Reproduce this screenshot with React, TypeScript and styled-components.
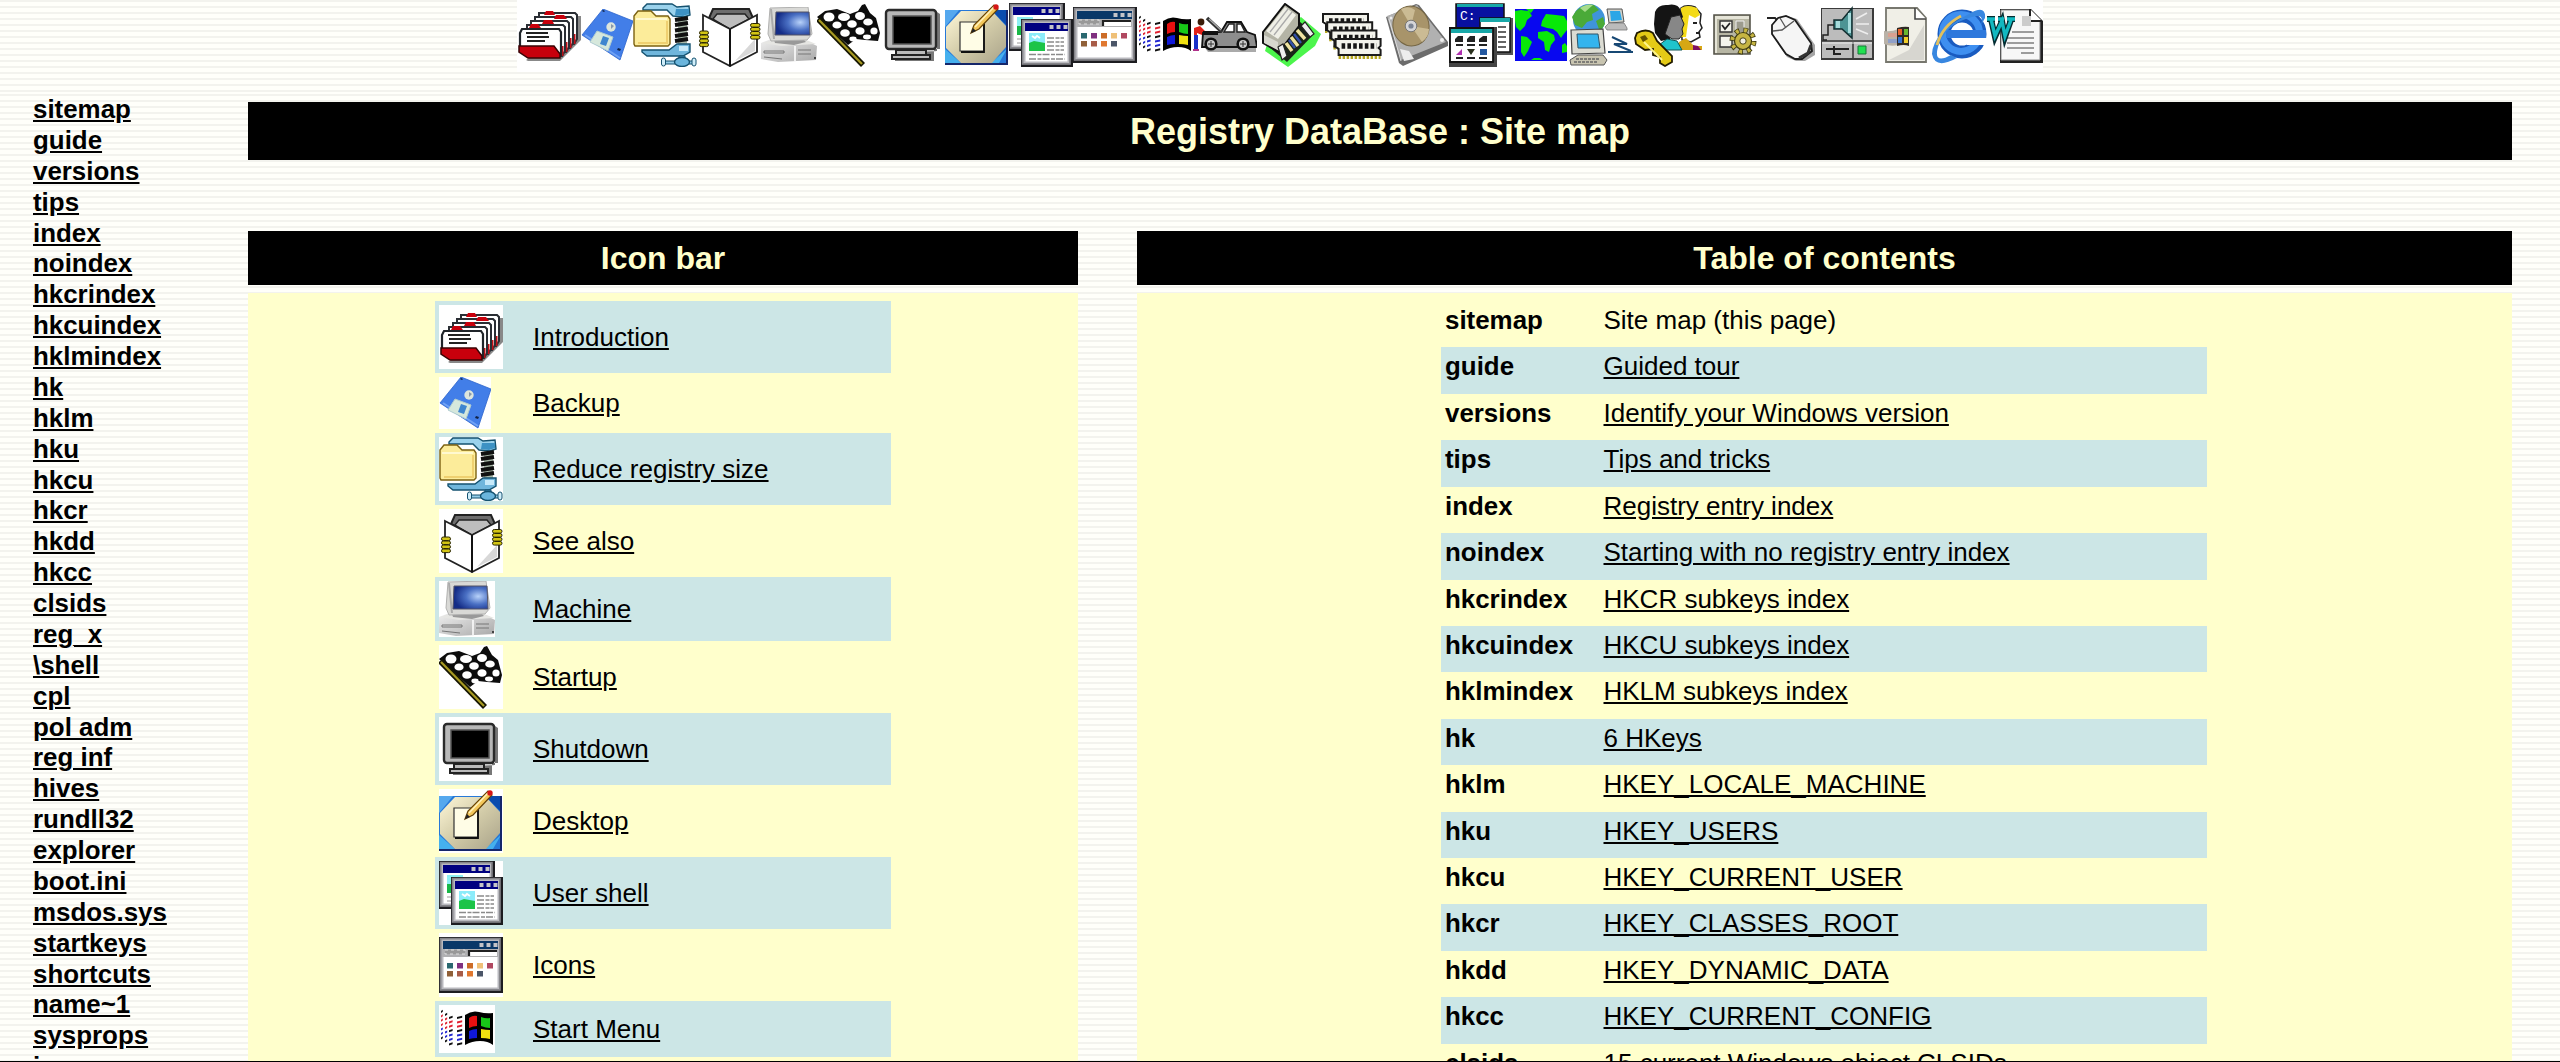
import React from "react";
import styled, { createGlobalStyle } from "styled-components";

const stripes = "repeating-linear-gradient(to bottom, #f3f3ee 0 2px, #fffffa 2px 6px)";

const GlobalStyle = createGlobalStyle`
  body {
    margin: 0;
    background: #fffffa;
    font-family: "Liberation Sans", Arial, Helvetica, sans-serif;
    font-size: 26px;
    color: #000;
  }
`;

const Page = styled.div`
  box-sizing: border-box;
  height: 1062px;
  display: flex;
  flex-direction: column;
  overflow: hidden;
  border-bottom: 1px solid #000;
`;

const TopFrame = styled.header`
  flex: none;
  height: 94px;
  display: flex;
  justify-content: center;
  align-items: flex-start;
  background: ${stripes};
`;

const IconStrip = styled.nav`
  height: 72px;
  padding-bottom: 2px;
  box-sizing: border-box;
  display: flex;
  align-items: center;
  background: #fff;
`;

const Frames = styled.div`
  flex: 1;
  min-height: 0;
  display: flex;
  overflow: hidden;
  background: ${stripes};
`;

const Sidebar = styled.nav`
  flex: none;
  width: 248px;
  box-sizing: border-box;
  padding-left: 33px;
  display: flex;
  flex-direction: column;
  align-items: flex-start;
`;

const SideLink = styled.a`
  flex: none;
  color: #000;
  font-weight: bold;
  font-size: 25.9px;
  line-height: 30.87px;
  text-decoration: underline;
`;

const Main = styled.main`
  flex: 1;
  padding: 8px 48px 0 0;
`;

const Title = styled.h1`
  margin: 0;
  padding-top: 1px;
  height: 57px;
  line-height: 58px;
  background: #000;
  color: #ffffcc;
  font-size: 36px;
  text-align: center;
`;

const Columns = styled.div`
  margin-top: 71px;
  display: grid;
  grid-template-columns: 830px 1fr;
  column-gap: 59px;
`;

const ColumnTitle = styled.h2`
  margin: 0 0 8px;
  height: 54px;
  line-height: 54px;
  background: #000;
  color: #ffffcc;
  font-size: 32px;
  text-align: center;
`;

const Panel = styled.section<{ $width: number }>`
  display: grid;
  grid-template-columns: ${(p) => p.$width}px;
  justify-content: center;
  align-content: start;
  height: 820px;
  box-sizing: border-box;
  padding-top: 8px;
  background: #ffffcc;
`;

const IconRow = styled.div<{ $shaded: boolean }>`
  display: grid;
  grid-template-columns: 94px 1fr;
  align-items: center;
  padding: 4px;
  background: ${(p) => (p.$shaded ? "#cce6e6" : "transparent")};
`;

const Link = styled.a`
  color: #000;
  text-decoration: underline;
  justify-self: start;
`;

const TocRow = styled.div<{ $shaded: boolean }>`
  display: grid;
  grid-template-columns: 158.5px 1fr;
  box-sizing: border-box;
  height: 46.43px;
  margin: 0 0.5px 0 -0.5px;
  padding: 4px;
  line-height: 30px;
  background: ${(p) => (p.$shaded ? "#cce6e6" : "transparent")};
`;

const Key = styled.b`
  font-size: 25.9px;
`;

const Picture = styled.svg`
  display: block;
  flex: none;
  background: #fff;
`;

const Cards = () => (
  <>
    <path d="M43 58 64 37V13h-4v24L42 55H12l-3 2 2 1z" fill="#888" />
    {[0, 1, 2, 3].map((i) => (
      <React.Fragment key={i}>
        <path
          d={`M${22 - i * 4} ${10 + i * 4}h36l2 2v24l-3 5h-35z`}
          fill="#fff"
          stroke="#2a2e34"
          strokeWidth="2"
        />
        <path d={`M${57 - i * 4} ${31 + i * 4}v10`} stroke="#c01018" strokeWidth="3" />
      </React.Fragment>
    ))}
    <path d="M5 26h37l2 3v23l-5-4H3V30z" fill="#fff" stroke="#20252a" strokeWidth="2.2" />
    <path d="M27 12l2-4h7l2 4zM37 16l2-4h8l3 4zM25 21l2-4h8l2 4zM12 25l2-4h7l3 4z" fill="#c8000c" />
    <path d="M9 30h22M10 34h22M10 38h18" stroke="#222" strokeWidth="1.8" />
    <path d="M2 43h35l6 8v4H11L2 49z" fill="#c8000c" stroke="#3a0404" strokeWidth="1.5" />
  </>
);

const Floppy = () => (
  <>
    <path d="M22 0 52 12 39 51 1 26z" fill="#427ee8" stroke="#2d65cb" strokeWidth=".8" />
    <path d="M4 26 39 49" stroke="#70a2f5" strokeWidth="2" />
    <circle cx="30" cy="18" r="4.7" fill="#dde6dc" />
    <path d="M30 15l3 2-3 3z" fill="#89a" />
    <path d="M16 22 32 28 27 42 9 33z" fill="#d6e8dc" stroke="#b0ccd0" />
    <path d="m22 27 6 2-3 8-6-2z" fill="#3f86cf" />
    <path d="m37 39 3 1-1 2-3-1zM22 1l2 1-1 1-2-1z" fill="#124" />
  </>
);

const Zip = () => (
  <>
    <path d="M10 5 14 1h25l5 3 12-1 1 9-6 2-11-1-6-6H10z" fill="#9bd2ec" stroke="#155270" strokeWidth="1.4" />
    <path d="M43 6h13v5l-6 2-8-1z" fill="#3d92c4" />
    <path d="M45 14h9v27h-9z" fill="#a8b8a8" />
    <path d="M42 17 55 15M42 22l13-2M42 27.500l13-2M42 33l13-2M42 38l13-2" stroke="#111" strokeWidth="4" />
    <path d="M57 41v8l-7 4H14l-5-4v-2h27l8-6z" fill="#70b6dc" stroke="#155270" strokeWidth="1.4" />
    <path d="M46 43h9v5h-9z" fill="#c8eafa" />
    <path d="M1 13l4-5h13l5 5h12l2 3v25l-2 2H2l-1-2z" fill="#fcec9a" stroke="#7c6212" strokeWidth="1.4" />
    <path d="M3 15h31v2H3z" fill="#fff9d0" />
    <path d="M33 18h2v23H5v-2h28z" fill="#efd070" />
    <path d="M46 53h6v4h-6z" fill="#428fba" stroke="#155270" />
    <path d="M31 58h30v3H31z" fill="#94cde8" stroke="#155270" strokeWidth="1.1" />
    <ellipse cx="49" cy="59" rx="7.5" ry="4.5" fill="#6bb5dc" stroke="#155270" strokeWidth="1.4" />
    <rect x="28.5" y="55" width="4" height="8" rx="2" fill="#d0eefa" stroke="#155270" />
    <rect x="59" y="55" width="4" height="8" rx="2" fill="#d0eefa" stroke="#155270" />
  </>
);

const Book = () => (
  <>
    <path d="M12 15 16 6h36l4 9-23 11z" fill="#6d6d6d" stroke="#222" strokeWidth="2" />
    <path d="M16 16l4-5h28l4 5-19 10z" fill="#bdbdbd" stroke="#222" strokeWidth="1.4" />
    <path d="M6 12 33 26v37L6 49zM60 12 33 26v37l27-14z" fill="#fff" stroke="#222" strokeWidth="1.8" />
    <path d="M38 58 58 36v12z" fill="#d8d8d8" />
    <path d="M33 26v37" stroke="#111" strokeWidth="2" />
    {[0, 4, 8, 12].map((y) => (
      <React.Fragment key={y}>
        <rect x="2.5" y={28 + y} width="9" height="3.6" rx="1.8" fill="#d2c414" stroke="#2a2600" />
        <rect x="53.5" y={20.5 + y} width="9.5" height="3.6" rx="1.8" fill="#d2c414" stroke="#2a2600" />
      </React.Fragment>
    ))}
  </>
);

const Computer = () => (
  <>
    <defs>
      <radialGradient id="screen" cx=".72" cy=".45" r=".7">
        <stop offset="0" stopColor="#b8d2fa" />
        <stop offset=".5" stopColor="#4a70c4" />
        <stop offset="1" stopColor="#142c86" />
      </radialGradient>
      <linearGradient id="case" x2="1" y2="1">
        <stop offset="0" stopColor="#f0f0f0" />
        <stop offset="1" stopColor="#a8a8a8" />
      </linearGradient>
    </defs>
    <path d="M13 31 0 36v16l17 3 38-2 1-14-14-7z" fill="url(#case)" />
    <path d="M1 36 20 39l35-2-12-5H14z" fill="#e6e6e3" />
    <path d="M12 30h28l5 5-12 3-19-2z" fill="#999" />
    <path d="M9 1 47 0l4 27-5 6-36 1-3-7z" fill="#d9d9d6" stroke="#b1b1b0" />
    <path d="M10 2l3 30" stroke="#aaa" strokeWidth="2" />
    <path d="M15 5h33l1 23H14z" fill="url(#screen)" stroke="#556" />
    <path d="M3 44h20v2H3zM3 50l18 2M37 43h13M37 47h13" stroke="#777" fill="none" />
    <path d="M34 39v15" stroke="#fff" strokeWidth="1.5" />
    <path d="M53 50h2v2h-2z" fill="#444" />
  </>
);

const Flag = () => (
  <>
    <path d="M0 14 8 8l12-2 13 5 8-3 4-6 3-1 5 9 6 5 4 15-2 8-13-1-9-1-8 6z" fill="#0c0c0c" />
    <g fill="#fff">
      <ellipse cx="12" cy="14" rx="5.5" ry="4.500" />
      <ellipse cx="27" cy="14" rx="6" ry="4" />
      <ellipse cx="43" cy="13" rx="5" ry="4" />
      <ellipse cx="20" cy="22" rx="4.6" ry="3.6" />
      <ellipse cx="35" cy="21" rx="4.8" ry="3.800" />
      <ellipse cx="51" cy="19" rx="4.800" ry="3.6" />
      <ellipse cx="28" cy="30" rx="4.8" ry="3.8" />
      <ellipse cx="43" cy="28" rx="4.6" ry="3.8" />
      <ellipse cx="57" cy="28" rx="3.6" ry="3.6" />
      <ellipse cx="36" cy="36" rx="3.6" ry="2.4" />
      <ellipse cx="50" cy="34" rx="4" ry="2.4" />
    </g>
    <path d="M1 16 46 62" stroke="#151500" strokeWidth="5.6" />
    <path d="M2 17 45 61" stroke="#a89a22" strokeWidth="2.2" />
  </>
);

const Monitor = () => (
  <>
    <path d="M14 50V58h39V46h6V11l-3-2v39z" fill="#777" />
    <rect x="5" y="7" width="50" height="39" rx="3" fill="#b8b8b8" stroke="#2a2a2a" strokeWidth="2.4" />
    <rect x="12" y="13" width="38" height="28" fill="#000" stroke="#555" strokeWidth="1.5" />
    <path d="M15 47h30v5H15z" fill="#bbb" stroke="#222" strokeWidth="2" />
    <path d="M11 52h38v4H11z" fill="#bbb" stroke="#222" strokeWidth="2" />
  </>
);

const Desktop = () => (
  <>
    <defs>
      <linearGradient id="desk" x2="1" y2="1">
        <stop offset="0" stopColor="#fff8d8" />
        <stop offset=".5" stopColor="#d2cba8" />
        <stop offset="1" stopColor="#a9a38a" />
      </linearGradient>
    </defs>
    <path d="M0 7h62v54H0z" fill="#2678d8" />
    <path d="M0 7h14L0 24z" fill="#55a8ee" />
    <path d="M0 46 16 60H0zM62 46 46 60h8z" fill="#45b0ee" />
    <path d="M62 7v16L46 7z" fill="#0a4cae" />
    <path d="M16 8h31l14 15v21L47 60H16L1 45V24z" fill="url(#desk)" />
    <path d="M62 7v54H0" fill="none" stroke="#15266a" strokeWidth="2" />
    <path d="M15 19h24v29H15z" fill="#fffde6" stroke="#333" strokeWidth="1.2" />
    <path d="M39 20v29H16" fill="none" stroke="#111" strokeWidth="1.8" />
    <path d="M26 30 29 22 49 2l4 4-19 20z" fill="#f3c75a" stroke="#644208" strokeWidth="1.2" />
    <path d="m30 24 19-20" stroke="#fff2bc" strokeWidth="1.5" />
    <path d="m26 30 2-5 3 3z" fill="#222" />
    <circle cx="51" cy="4" r="2.7" fill="#d51616" />
  </>
);

const WindowFrame = ({ x, y, w, h, title }: { x: number; y: number; w: number; h: number; title: string }) => (
  <>
    <rect x={x} y={y} width={w} height={h} fill="#1c1c20" />
    <rect x={x + 0.8} y={y + 0.8} width={w - 3} height={h - 3} fill="#85858a" />
    <rect x={x + 2.5} y={y + 2.5} width={w - 6.5} height={h - 6.5} fill="#b9b9be" />
    <rect x={x + 4.5} y={y + 4} width={w - 10} height={h - 9.5} fill="#fff" />
    <rect x={x + 4} y={y + 4} width={w - 9} height="8" fill={title} />
    {[22, 15, 8].map((d) => (
      <rect key={d} x={x + w - d - 1.5} y={y + 6} width="4" height="4" fill="#c4c4c8" />
    ))}
  </>
);

const TwoWindows = () => (
  <>
    <WindowFrame x={0} y={0} w={56} h={48} title="#000080" />
    <path d="M8 14h16v18H8z" fill="#8ef0f4" />
    <path d="M8 23h6v9H8z" fill="#18b848" />
    <path d="M8 36h5M8 40h5" stroke="#999" />
    <WindowFrame x={12} y={16} w={52} h={48} title="#000080" />
    <path d="M20 30h16v18H20z" fill="#8cecfa" />
    <path d="M20 40l5-2 11 2v8H20z" fill="#1cc448" />
    <path d="m23 33 3 2 2-2 3 2" stroke="#fff" fill="none" strokeWidth="1.8" />
    <path d="M38 35h17M38 39h17M38 43h17M38 47h17M20 51.500h36M20 56h36" stroke="#8a8a8a" strokeWidth="1.5" strokeDasharray="7 1.5 4 1" />
  </>
);

const IconWindow = () => (
  <>
    <WindowFrame x={0} y={4} w={64} h={56} title="#0a3868" />
    <path d="M3 16h56v8H3z" fill="#b0b0b2" />
    <path d="M6 17h20v4H6z" fill="#999" stroke="#ddd" strokeDasharray="3 3" />
    <path d="M30 17h28v6H30z" fill="#fff" />
    <path d="M30 23v-5h28" fill="none" stroke="#222" strokeWidth="2.2" />
    {["#2a6870", "#803080", "#cc6c28", "#efc078", "#b04860", "#906038", "#a85c48", "#e07830", "#4b5668"].map((c, i) => (
      <rect key={i} x={8 + (i % 5) * 10} y={i < 5 ? 30 : 38} width="6" height="5.5" fill={c} />
    ))}
  </>
);

const dotColumns = [
  { x: 2, y: 5, size: 1.8 },
  { x: 6, y: 8, size: 2.2 },
  { x: 10, y: 11, size: 3.6 },
  { x: 18, y: 11, size: 5.2 },
];

const WinFlag = () => (
  <>
    <path d="M26 10q7-5 14-3t14 1v32q-5-4-13-4t-15 4z" fill="#000" />
    <path d="M30 13q4-3 8-2v10q-4 0-8 2z" fill="#e81010" />
    <path d="M42 12q5 2 9 1v10q-4 0-9-2z" fill="#18c818" />
    <path d="M30 26q4-2 8-2v9q-4 0-8 1z" fill="#1018d8" />
    <path d="M42 24q5 1 9 1v9q-4-1-9-1z" fill="#f0e010" />
    {dotColumns.map((col, c) =>
      [0, 1, 2, 3, 4, 5, 6].map((r) => {
        const edge = r === 0 || r === 6;
        const fill = edge || (r === 3 && c > 1) ? "#111" : r < 4 ? "#e02030" : "#2228d0";
        return (
          <path
            key={`${c}-${r}`}
            d={`M${col.x} ${col.y + r * 4.4 + 1}l${col.size}-1.2v2l-${col.size} 1.200z`}
            fill={fill}
          />
        );
      })
    )}
  </>
);

const Car = () => (
  <>
    <path d="M15 49h48v-4H12z" fill="#aaa" />
    <path d="M1 25l6-2 5 5-3 4-5-2v4H1z" fill="#e02018" />
    <circle cx="8" cy="19" r="3.4" fill="#3a1c08" />
    <path d="M1 32h4v15H1z" fill="#1830c8" />
    <path d="M0 47h6" stroke="#b0308a" strokeWidth="2" />
    <path d="M10 30 28 29l6-10h14l6 10 8 3 2 12H9z" fill="#8d8d8d" stroke="#111" strokeWidth="1.8" />
    <path d="m31 29 5-8h5v8zM44 21h4l4 8h-8z" fill="#fff" stroke="#222" strokeWidth="1.4" />
    <path d="M14 15 29 29" stroke="#333" strokeWidth="3.6" />
    <path d="M16 16 28 27" stroke="#aaa" strokeWidth="1.3" />
    <path d="M10 28h15v4H10z" fill="#111" />
    {[18, 50].map((x) => (
      <React.Fragment key={x}>
        <circle cx={x} cy="41" r="6.6" fill="#111" />
        <circle cx={x} cy="41" r="4" fill="#ccc" />
        <path d={`M${x - 3} 41h6M${x} 38v6`} stroke="#333" />
      </React.Fragment>
    ))}
  </>
);

const Device = () => (
  <>
    <path d="M44 14 64 31l-6 12-27 21L8 48l3-10z" fill="#4cf54c" />
    <path d="M42 18 57 31 30 59 12 44z" fill="#1a2418" />
    <path d="M6 29 28 1l14 10v12L22 49 6 40z" fill="#b4b4a6" stroke="#111" strokeWidth="2" />
    <path d="M9 28 28 4l11 8-18 24z" fill="#efefe6" />
    <path d="m13 29 18-23M17 32l18-23" stroke="#aaa" strokeWidth="1.3" />
    <path d="M7 32l14 7v8L7 40z" fill="#d8d8cf" />
    <path d="m29 40 6 8M34 34l7 9M40 27l8 9" stroke="#efe3a0" strokeWidth="3.5" />
    <path d="m32 37 6 8M37 31l7 9" stroke="#3450a8" strokeWidth="2.4" />
    <path d="M21 44l5-3 4 12-5 4zM44 23l4-4 9 12-4 3z" fill="#eee" stroke="#222" strokeWidth="1.2" />
  </>
);

const Memory = () => (
  <>
    {[0, 1, 2, 3].map((i) => (
      <g key={i} transform={`translate(${i * 4.2} ${i * 8.3})`}>
        <path
          d={i === 3 ? "M5 29h42" : "M4 28h6"}
          fill="none"
          stroke="#b5a620"
          strokeWidth="4"
          strokeDasharray="2.5 1.5"
        />
        <path d="M2 11h45v7l-2 2 2 2v5H5v-6l-3-2z" fill="#f3f3ec" stroke="#1b1b1b" strokeWidth="2" />
        <path d="M8 18h35" stroke="#161616" strokeWidth="5.500" strokeDasharray="3.6 2.2" />
      </g>
    ))}
  </>
);

const HardDisk = () => (
  <>
    <path d="M1 14 31 1l3 1 29 37v4L18 63l-4-3z" fill="#6c6c6c" />
    <path d="M2 13 32 2 61 39 16 57z" fill="#b1b1b1" />
    <ellipse cx="26" cy="23" rx="18" ry="20" fill="#a8946a" stroke="#756644" strokeWidth="1" transform="rotate(-12 26 23)" />
    <path d="M26 23 16 6q8-4 14 1zM26 23l11 16q7-5 7-13z" fill="#cbbb94" />
    <circle cx="26" cy="23" r="5.8" fill="#d5d5d8" stroke="#777" />
    <circle cx="26" cy="23" r="2.6" fill="#7b8494" />
    <path d="M15 46 24 48l5 8-10 2z" fill="#eee" />
    <circle cx="57" cy="37" r="2" fill="#eee" />
    <circle cx="6" cy="15" r="1.5" fill="#eee" />
    <path d="m4 16 12 42" stroke="#ddd" />
  </>
);

const Consoles = () => (
  <>
    <path d="M7 1h48v25H7z" fill="#0810a0" stroke="#111" strokeWidth="1.5" />
    <path d="M8 1h46v3H8z" fill="#18a8a8" />
    <text x="11" y="17" fill="#fff" fontSize="13" fontFamily="Liberation Mono, monospace">C:</text>
    <path d="M31 15h33v37H31z" fill="#555" />
    <path d="M31 15h30v34H31z" fill="#fff" stroke="#111" strokeWidth="1.5" />
    <path d="M31 15h30v4H31z" fill="#18a8a8" />
    <path d="M49 24h8M49 29h8M49 34h8M49 39h8M49 44h8" stroke="#333" strokeWidth="1.7" />
    <path d="M0 24h48v40H0z" fill="#444" />
    <path d="M1 25h43v34H1z" fill="#fff" stroke="#111" strokeWidth="1.8" />
    <path d="M2 26h41v4H2z" fill="#18a8a8" />
    <path d="M7 42h7M18 42h8M30 42h8M7 55h7M18 55h8M30 55h8" stroke="#222" strokeWidth="2" />
    <path d="M6 39v-3l3-3h5v6zM18 39v-3l3-3h5v6zM30 39v-3l4-3h4v6z" fill="#222" />
    <path d="m7 52 6-6v6z" fill="#b030b0" />
    <path d="M18 46h8l-4 6z" fill="#2a301c" />
    <path d="M31 46h7v6h-7z" fill="#2458a0" />
  </>
);

const WorldMap = () => (
  <>
    <path d="M2 2h52v52H2z" fill="#0808f0" />
    <g fill="#08e808">
      <path d="M2 4 8 3l8 1 3 5-5 4-2 6-5 5-4-4-1-6z" />
      <path d="M8 29l6 1 5 5-4 9-4 6-3-5z" />
      <path d="M29 14 33 7l10 1 8 1 3 5v9l-4 5-2 3-4-6-4-3-6-1-6-2z" />
      <path d="M25 25l9-1 7 4 1 5-4 5-2 7-4-2-1-8-6-4z" />
      <path d="M49 38l3-2 2 3v6l-5 1zM13 2h8l-3 4zM18 53l3-2h6l3 2z" />
    </g>
  </>
);

const Network = () => (
  <>
    <circle cx="20" cy="17" r="16" fill="#3f94da" />
    <path d="M7 8q9-8 18-6l5 5-7 4 1 6-6 2-5 6-7-3-3-8zM27 18l7-4 2 7-5 8z" fill="#4aaa38" />
    <path d="M11 5q7-5 13-3l-8 7z" fill="#a7dc8c" />
    <path d="M38 6h15l2 13-15 1z" fill="#d2d2ca" stroke="#555" />
    <path d="M41 8h10l2 9-11 1z" fill="#2ca6e6" />
    <path d="M36 24l4-4h15l3 5v2H38z" fill="#bbb" stroke="#777" strokeWidth=".8" />
    <path d="M2 27 34 26l2 24-33 1z" fill="#dcdcd3" stroke="#444" strokeWidth="1.2" />
    <path d="M8 31h21l2 14H9z" fill="#34b4ee" stroke="#356" />
    <path d="M1 57l8-5h25l4 5-3 5H2z" fill="#c8c4b0" stroke="#555" />
    <path d="M7 56h23M5 59h23" stroke="#666" strokeWidth="1.3" strokeDasharray="3 1" />
    <path d="M43 34 58 41H45l17 7M39 49h25" fill="none" stroke="#174874" strokeWidth="2" />
  </>
);

const UsersKey = () => (
  <>
    <path d="M48 5q5-4 14-1l6 7-1 9 2 5-3 4 1 5-9 5-9-2z" fill="#fff" stroke="#222" strokeWidth="1.5" />
    <path d="M48 5q6-4 16 0l3 7-5 3-6-3-3 22h-5z" fill="#f3da18" />
    <path d="M60 20h4M63 30h4" stroke="#222" strokeWidth="2" />
    <path d="M46 39l7-4 8 8h8v4H44z" fill="#d6a714" />
    <path d="M60 42l5 1 3 4h-8z" fill="#801060" />
    <path d="M22 9q3-8 13-7 10-2 13 6l2 6-7 8-6 14-9 2-6-8-1-9z" fill="#141414" />
    <path d="M38 14l9-2 4 9-2 5 1 5-4 5h-7l-7-5z" fill="#878787" stroke="#222" />
    <path d="M26 42 34 36l10 2 5 9H28z" fill="#20c4cc" stroke="#155" />
    <path d="M4 30q9-5 16 0l4 8 15 15v6l-7 4-5-3v-6l-7-2v-6l-8 1-9-6-1-6z" fill="#e4ca16" stroke="#221c00" strokeWidth="1.8" />
    <path d="m11 39 18 18" stroke="#fff58a" strokeWidth="2" />
    <path d="M7 34l5-2 3 4-5 3z" fill="#665400" />
  </>
);

const Settings = () => (
  <>
    <path d="M9 8h36v39H9z" fill="#b7b6a4" stroke="#55544a" strokeWidth="1.6" />
    <path d="M10 9h34v3H12v34h-2z" fill="#e5e4d7" />
    <path d="M15 14h12v11H15zM15 29h12v11H15z" fill="#f4f4ec" stroke="#333" strokeWidth="1.4" />
    <path d="m17 18 3 4 5-6" fill="none" stroke="#222" strokeWidth="1.8" />
    <path d="M31 14h8v12h-8z" fill="#9c9b8e" stroke="#eee" />
    <circle cx="38" cy="34" r="10.500" fill="none" stroke="#3e3b10" strokeWidth="6" strokeDasharray="4.400 3.850" />
    <circle cx="38" cy="34" r="10.2" fill="none" stroke="#c6b543" strokeWidth="5" strokeDasharray="2.800 5.210" strokeDashoffset="-.8" />
    <circle cx="38" cy="34" r="8.500" fill="#c6b543" stroke="#3e3b10" strokeWidth="1.2" />
    <circle cx="38" cy="34" r="3.2" fill="#f0efe2" stroke="#4a4310" />
  </>
);

const Mouse = () => (
  <>
    <path d="M6 11h8l3 3" fill="none" stroke="#222" strokeWidth="2" />
    <path d="M17 12 12 19v10l14 21 9 4h9l10-6V38L36 12 26 9z" fill="#a5a5a5" />
    <path d="M17 11 11 18v9l14 20 9 5h7l10-8-1-8L34 13 25 9z" fill="#f5f5f5" stroke="#1c1c1c" strokeWidth="1.8" />
    <path d="M12 24l9-1 12-9M19 11l6 10" fill="none" stroke="#555" strokeWidth="1.3" />
    <path d="m50 38-3 8-9 5" fill="none" stroke="#333" strokeWidth="3" />
  </>
);

const Speaker = () => (
  <>
    <path d="M4 3h53v52H4z" fill="#3b3b3b" />
    <path d="M5 4h50v49H5z" fill="#bcbcbc" />
    <path d="M5 36h50M36 37v16" stroke="#333" strokeWidth="1.5" />
    <path d="M5 38h50" stroke="#eee" />
    <path d="M9 44h23M17 41v8h7" stroke="#222" strokeWidth="2" fill="none" />
    <path d="M41 41h8v8h-8z" fill="#20e050" stroke="#197838" />
    <path d="M17 15h8L35 3v30L25 24h-8z" fill="#4c9494" stroke="#122e30" strokeWidth="1.5" />
    <path d="M19 16h4v7h-4zM31 8h3v20h-3z" fill="#a6dcdc" />
    <path d="m39 14 11-6M39 19h13M39 24l12 5" stroke="#eee" strokeWidth="1.6" />
    <path d="M17 20h-6v10H6v5h4" fill="none" stroke="#222" strokeWidth="1.5" />
  </>
);

const WinDocument = () => (
  <>
    <path d="M7 3h31l9 10v44H7z" fill="#f0efe7" stroke="#77776e" strokeWidth="1.8" />
    <path d="M45 20v35H10l20-10z" fill="#d7d6d0" />
    <path d="M36 3v11h11" fill="#fff" stroke="#444" strokeWidth="1.6" />
    <path d="M5 26q8 1 14-2v16q-7 2-14-1z" fill="#b9b2a8" />
    <path d="M9 28h10v4H9z" fill="#d8a090" />
    <path d="M9 34h10v4H9z" fill="#90a0c8" />
    <path d="M18 23q7-2 12-1v19q-5-2-12 0z" fill="#302a24" />
    <path d="M19 24h4v6h-4z" fill="#e86028" />
    <path d="M25 24h4v6h-4z" fill="#68b830" />
    <path d="M19 32h4v6h-4z" fill="#3774d0" />
    <path d="M25 32h4v6h-4z" fill="#efcd2a" />
  </>
);

const Explorer = () => (
  <>
    <circle cx="31" cy="29" r="18" fill="none" stroke="#195bc0" strokeWidth="13" />
    <circle cx="30" cy="28" r="18.5" fill="none" stroke="#3e8ff0" strokeWidth="7" />
    <path d="M15 25h40v8H15z" fill="#2d78dc" />
    <path d="M33 33h24v7H36z" fill="#fff" />
    <path d="M38 9q17-10 16 4l-4 7q4-12-9-8Q14 19 7 42q-5 18 13 8l6 3Q4 65 1 49 2 27 38 9z" fill="#3887e0" />
    <path d="M30 11Q11 21 6 40" fill="none" stroke="#e3c05c" strokeWidth="2.8" />
  </>
);

const WordDocument = () => (
  <>
    <path d="M13 4h31l12 12v42H13z" fill="#222" />
    <path d="M14 5h29l10 10v40H14z" fill="#f7f7f7" stroke="#888" />
    <path d="M43 4v12h12" fill="#fff" stroke="#222" strokeWidth="2" />
    <path d="M35 11h9v10h-9z" fill="#ccc" />
    <path d="M25 27h22M20 33h27M20 38h27M20 43h27M34 48h13" stroke="#9c9c9c" strokeWidth="1.8" />
    <path d="M0 14h8M11 14h6M20 14h8M4 14l4 18 7-16 3 16 6-17" fill="none" stroke="#052d32" strokeWidth="6" />
    <path d="M0 14h8M11 14h6M20 14h8M4 14l4 17 7-15 3 15 6-16" fill="none" stroke="#12b8c0" strokeWidth="3.4" />
  </>
);

type Art = { name: string; w: number; h: number; Draw: () => React.JSX.Element };

const icons: Art[] = [
  { name: "Introduction", w: 64, h: 64, Draw: Cards },
  { name: "Backup", w: 52, h: 52, Draw: Floppy },
  { name: "Reduce registry size", w: 64, h: 64, Draw: Zip },
  { name: "See also", w: 64, h: 64, Draw: Book },
  { name: "Machine", w: 56, h: 56, Draw: Computer },
  { name: "Startup", w: 64, h: 64, Draw: Flag },
  { name: "Shutdown", w: 64, h: 64, Draw: Monitor },
  { name: "Desktop", w: 64, h: 64, Draw: Desktop },
  { name: "User shell", w: 64, h: 64, Draw: TwoWindows },
  { name: "Icons", w: 64, h: 64, Draw: IconWindow },
  { name: "Start Menu", w: 56, h: 48, Draw: WinFlag },
  { name: "", w: 64, h: 64, Draw: Car },
  { name: "", w: 64, h: 64, Draw: Device },
  { name: "", w: 64, h: 64, Draw: Memory },
  { name: "", w: 64, h: 64, Draw: HardDisk },
  { name: "", w: 64, h: 64, Draw: Consoles },
  { name: "", w: 56, h: 56, Draw: WorldMap },
  { name: "", w: 64, h: 64, Draw: Network },
  { name: "", w: 72, h: 64, Draw: UsersKey },
  { name: "", w: 56, h: 56, Draw: Settings },
  { name: "", w: 56, h: 56, Draw: Mouse },
  { name: "", w: 62, h: 60, Draw: Speaker },
  { name: "", w: 52, h: 60, Draw: WinDocument },
  { name: "", w: 56, h: 60, Draw: Explorer },
  { name: "", w: 56, h: 60, Draw: WordDocument },
];

const Icon = ({ art }: { art: Art }) => (
  <Picture width={art.w} height={art.h} viewBox={`0 0 ${art.w} ${art.h}`}>
    <art.Draw />
  </Picture>
);

const sideLinks = [
  "sitemap", "guide", "versions", "tips", "index", "noindex", "hkcrindex", "hkcuindex", "hklmindex",
  "hk", "hklm", "hku", "hkcu", "hkcr", "hkdd", "hkcc", "clsids", "reg_x", "\\shell", "cpl", "pol adm",
  "reg inf", "hives", "rundll32", "explorer", "boot.ini", "msdos.sys", "startkeys", "shortcuts",
  "name~1", "sysprops", "icons",
];

const contents: [string, string][] = [
  ["sitemap", "Site map (this page)"],
  ["guide", "Guided tour"],
  ["versions", "Identify your Windows version"],
  ["tips", "Tips and tricks"],
  ["index", "Registry entry index"],
  ["noindex", "Starting with no registry entry index"],
  ["hkcrindex", "HKCR subkeys index"],
  ["hkcuindex", "HKCU subkeys index"],
  ["hklmindex", "HKLM subkeys index"],
  ["hk", "6 HKeys"],
  ["hklm", "HKEY_LOCALE_MACHINE"],
  ["hku", "HKEY_USERS"],
  ["hkcu", "HKEY_CURRENT_USER"],
  ["hkcr", "HKEY_CLASSES_ROOT"],
  ["hkdd", "HKEY_DYNAMIC_DATA"],
  ["hkcc", "HKEY_CURRENT_CONFIG"],
  ["clsids", "15 current Windows object CLSIDs"],
];

export default function App() {
  return (
    <Page>
      <GlobalStyle />
      <TopFrame>
        <IconStrip>
          {icons.map((art, i) => (
            <Icon key={i} art={art} />
          ))}
        </IconStrip>
      </TopFrame>
      <Frames>
        <Sidebar>
          {sideLinks.map((label) => (
            <SideLink key={label} href="#">{label}</SideLink>
          ))}
        </Sidebar>
        <Main>
          <Title>Registry DataBase : Site map</Title>
          <Columns>
            <div>
              <ColumnTitle>Icon bar</ColumnTitle>
              <Panel $width={456}>
                {icons.slice(0, 11).map((art, i) => (
                  <IconRow key={art.name} $shaded={i % 2 === 0}>
                    <Icon art={art} />
                    <Link href="#">{art.name}</Link>
                  </IconRow>
                ))}
              </Panel>
            </div>
            <div>
              <ColumnTitle>Table of contents</ColumnTitle>
              <Panel $width={766}>
                {contents.map(([key, label], i) => (
                  <TocRow key={key} $shaded={i % 2 === 1}>
                    <Key>{key}</Key>
                    {i === 0 ? <span>{label}</span> : <Link href="#">{label}</Link>}
                  </TocRow>
                ))}
              </Panel>
            </div>
          </Columns>
        </Main>
      </Frames>
    </Page>
  );
}
